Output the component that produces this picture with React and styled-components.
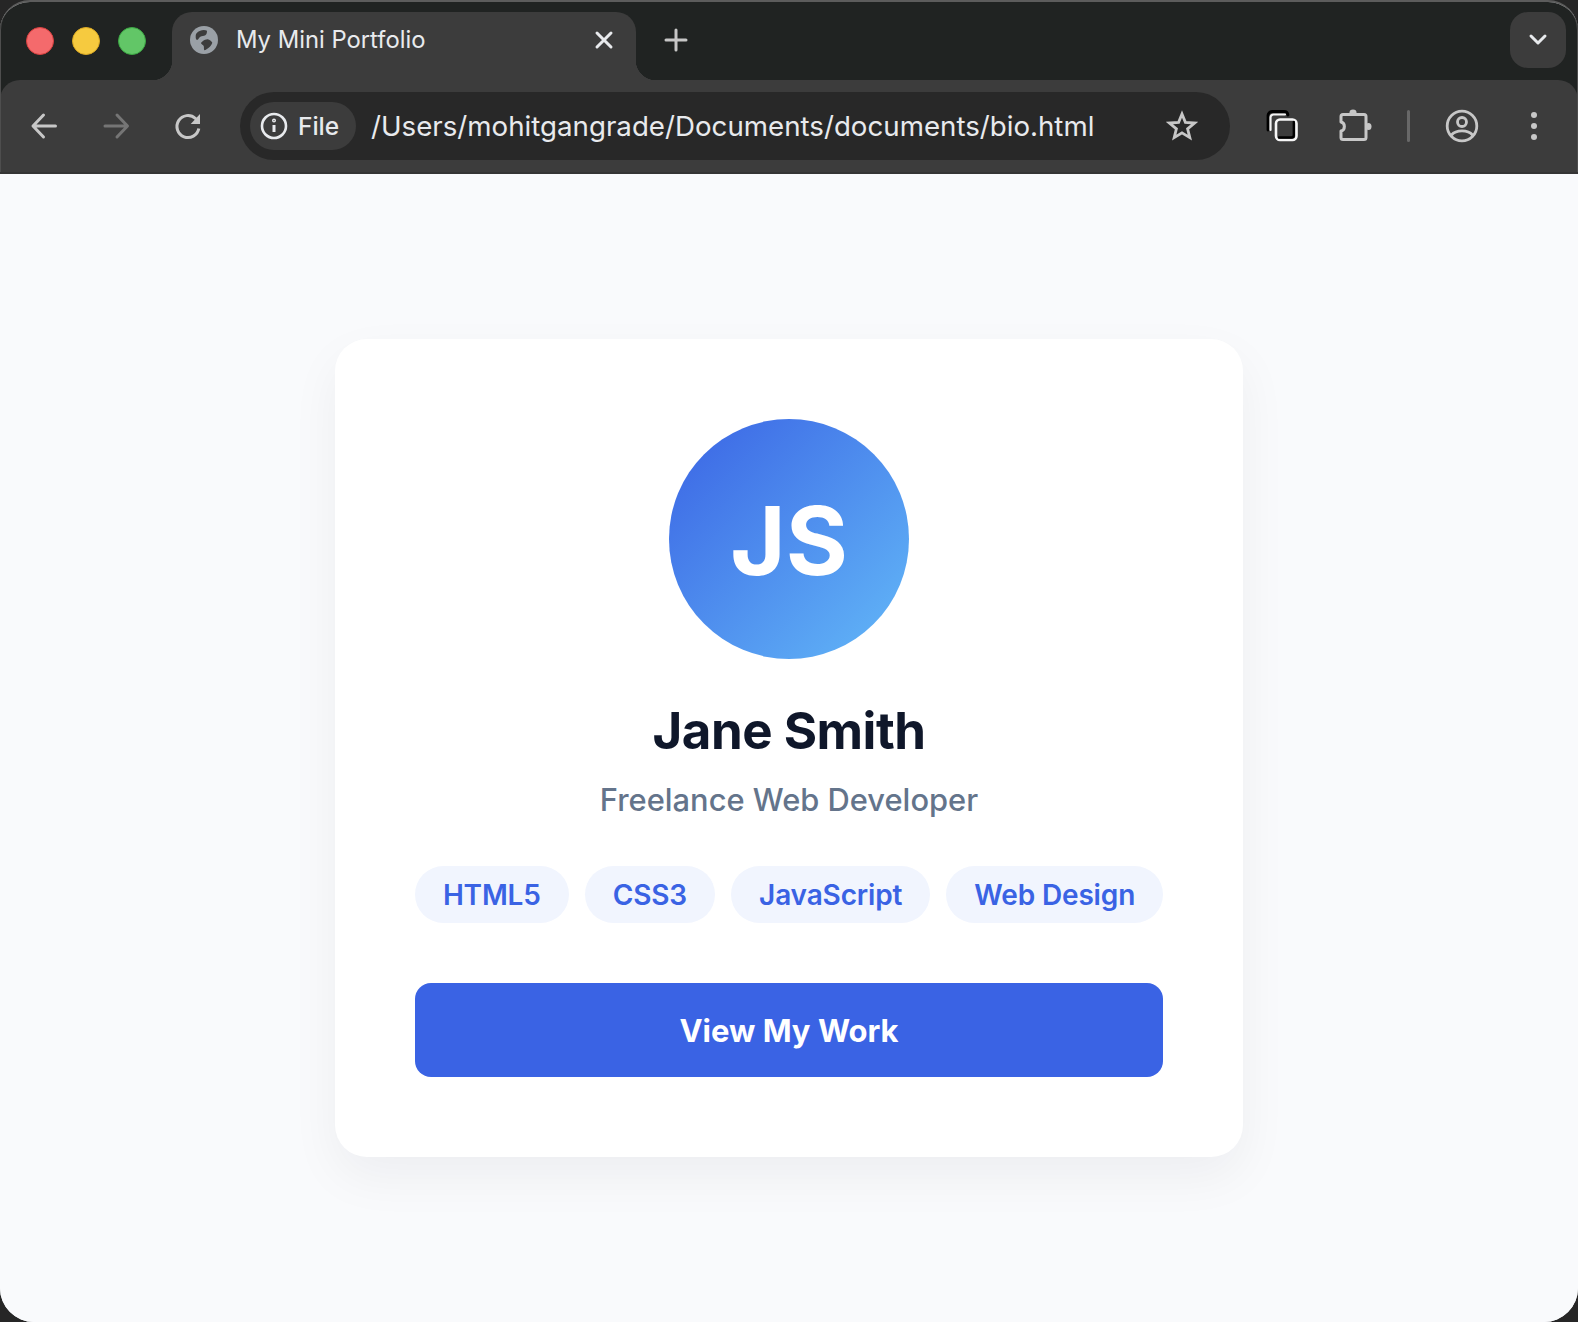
import React from "react";
import styled, { createGlobalStyle } from "styled-components";

const Global = createGlobalStyle`
  html, body { margin: 0; padding: 0; background: #262626; }
  body { font-family: Inter, "Liberation Sans", sans-serif; -webkit-font-smoothing: antialiased; }
  #root { width: 1578px; height: 1322px; }
  * { box-sizing: border-box; }
`;

const Win = styled.div`
  width: 1578px; height: 1322px; display: flex; flex-direction: column; position: relative;
  border-radius: 30px 30px 34px 34px; overflow: hidden; background: #f9fafc;
  border-top: 2px solid #5c5c5c;
  &::after {
    content: ""; position: absolute; top: -2px; left: 0; right: 0; height: 172px; pointer-events: none;
    border: 1px solid #4e4e4e; border-top: 0; border-bottom: 0; border-radius: 30px 30px 0 0;
  }
`;
const TitleBar = styled.div`
  height: 78px; flex: none; background: #202322; display: flex; align-items: flex-end;
  padding-left: 26px; position: relative;
`;
const Lights = styled.div`
  display: flex; gap: 18px; align-self: flex-start; margin-top: 25px; margin-right: 26px;
`;
const Light = styled.span`
  width: 28px; height: 28px; border-radius: 50%; background: ${p => p.$fill};
  border: 1px solid ${p => p.$edge}; display: block;
`;
const Tab = styled.div`
  width: 464px; height: 68px; background: #3c3c3c; border-radius: 20px 20px 0 0;
  display: flex; align-items: center; padding: 0 20px 13px 17px; position: relative; color: #e8eaed;
  &::before, &::after {
    content: ""; position: absolute; bottom: 0; width: 20px; height: 20px;
  }
  &::before { left: -20px; background: radial-gradient(circle at 0 0, transparent 20px, #3c3c3c 20.5px); }
  &::after { right: -20px; background: radial-gradient(circle at 100% 0, transparent 20px, #3c3c3c 20.5px); }
`;
const TabTitle = styled.span`
  font-size: 23.8px; font-weight: 400; margin-left: 17px; flex: 1; white-space: nowrap;
`;
const NewTab = styled.button`
  width: 56px; height: 56px; background: none; border: 0; padding: 0; margin: 0 0 12px 12px;
  display: flex; align-items: center; justify-content: center; align-self: flex-end;
`;
const TabMenu = styled.button`
  position: absolute; top: 10px; right: 12px; width: 56px; height: 56px; background: #3c3c3c; border: 0;
  border-radius: 18px; display: flex; align-items: center; justify-content: center; padding: 0;
`;
const Toolbar = styled.div`
  height: 94px; flex: none; background: #3c3c3c; display: flex; align-items: center;
  padding: 0 8px; border-bottom: 2px solid #353535; border-radius: 20px 20px 0 0;
`;
const ToolbarWrap = styled.div`
  background: #202322; flex: none;
`;
const ToolBtn = styled.button`
  width: 72px; height: 72px; flex: none; background: none; border: 0; padding: 0;
  display: flex; align-items: center; justify-content: center;
`;
const Omnibox = styled.div`
  flex: 1; height: 68px; margin: 0 16px; background: #282828; border-radius: 34px;
  display: flex; align-items: center; padding: 0 32px 0 10px; color: #e8eaed;
`;
const Chip = styled.div`
  width: 106px; height: 48px; background: #3c3c3c; border-radius: 24px; display: flex; align-items: center;
  padding-left: 10px; gap: 10px; font-size: 24.5px; font-weight: 500; flex: none;
`;
const Url = styled.span`
  font-size: 27.7px; margin-left: 15px; flex: 1; white-space: nowrap;
`;
const Divider = styled.div`
  width: 36px; flex: none; display: flex; justify-content: center;
  &::after { content: ""; width: 3px; height: 32px; border-radius: 2px; background: #686868; }
`;
const Page = styled.main`
  flex: 1; display: flex; align-items: center; justify-content: center; background: #f9fafc;
`;
const Card = styled.section`
  width: 908px; height: 818px; background: #fff; border-radius: 32px; padding: 80px;
  box-shadow: 0 20px 50px rgba(15, 23, 42, 0.05);
  display: flex; flex-direction: column; align-items: center;
`;
const Avatar = styled.div`
  width: 240px; height: 240px; border-radius: 50%; flex: none; padding-top: 3px;
  background: linear-gradient(135deg, #3a63e4, #63b9f8);
  display: flex; align-items: center; justify-content: center;
  color: #fff; font-size: 95px; font-weight: 700;
`;
const Name = styled.h1`
  margin: 40px 0 0; font-size: 51px; line-height: 64px; font-weight: 700; color: #0f172a; letter-spacing: -0.5px;
`;
const Role = styled.p`
  margin: 13px 0 0; font-size: 30.85px; line-height: 48px; font-weight: 500; color: #64748b;
`;
const Tags = styled.div`
  display: flex; gap: 16px; margin-top: 42px; justify-content: center;
`;
const TagPill = styled.span`
  height: 57px; padding: 1px 28px 0; border-radius: 28.5px; background: #f1f5fe; color: #3a63e4;
  font-size: 28px; font-weight: 600; display: flex; align-items: center; white-space: nowrap; letter-spacing: -0.15px;
`;
const Cta = styled.button`
  margin-top: 60px; width: 748px; height: 94px; flex: none; border: 0; border-radius: 16px; background: #3a63e4; color: #fff;
  font-family: inherit; font-size: 31px; font-weight: 700;
`;

const Stroke = ({ size = 36, color = "#c7c7c7", w = 3, children }) => (
  <svg width={size} height={size} viewBox={`0 0 ${size} ${size}`} fill="none" stroke={color} strokeWidth={w} strokeLinecap="round" strokeLinejoin="round">{children}</svg>
);

export default function App() {
  return (
    <>
      <Global />
      <Win>
        <TitleBar>
          <Lights>
            <Light $fill="#f46a6c" $edge="#d9403f" />
            <Light $fill="#f6ca3f" $edge="#dba924" />
            <Light $fill="#62c667" $edge="#3ca844" />
          </Lights>
          <Tab>
            <svg width="30" height="30" viewBox="0 0 30 30">
              <circle cx="15" cy="15" r="14" fill="#9aa0a6" />
              <path d="M6.7 11.7C6.6 10 7 8.8 8 7.7 10 5.8 12.5 5 14.7 5 16 5 17.2 5.2 18 5.7 18 7.6 17.6 9.4 16.3 10.3 14.8 11.3 12.8 10.8 11.3 11.7 10 12.5 9.6 14.6 8 15 7 14.6 6.6 13 6.7 11.7Z" fill="#3c3c3c" />
              <path d="M14 16C15.4 15 17 14.2 18.7 14.3 20.6 14.6 22.4 16 23.3 17.7 22.6 19.6 21.4 21.4 19.7 22.7 18.4 23.8 16.8 24.8 15.3 25.3 14.6 24 15.2 22.4 14.7 21 14.2 19.8 12.6 19.6 12 18.3 12.2 17.2 13.2 16.6 14 16Z" fill="#3c3c3c" />
            </svg>
            <TabTitle>My Mini Portfolio</TabTitle>
            <Stroke size={24} color="#e8eaed"><path d="M5 5L19 19M19 5L5 19" /></Stroke>
          </Tab>
          <NewTab aria-label="New tab">
            <Stroke size={26} color="#c7c7c7"><path d="M13 3V23M3 13H23" /></Stroke>
          </NewTab>
          <TabMenu aria-label="Tab menu">
            <Stroke size={24} color="#e8eaed"><path d="M5 8L12 15L19 8" /></Stroke>
          </TabMenu>
        </TitleBar>
        <ToolbarWrap>
          <Toolbar>
            <ToolBtn aria-label="Back">
              <Stroke size={32}><path d="M27.5 16H5.5M15.5 5L5 16L15.5 27" /></Stroke>
            </ToolBtn>
            <ToolBtn aria-label="Forward">
              <Stroke size={32} color="#757575"><path d="M5 16H27M17 5L27.5 16L17 27" /></Stroke>
            </ToolBtn>
            <ToolBtn aria-label="Reload">
              <svg width="32" height="32" viewBox="0 0 32 32" fill="none">
                <path d="M26.8 18.5A11 11 0 1 1 23.5 8.5L26 11" stroke="#c7c7c7" strokeWidth="3" />
                <path d="M28 4V14H18.7Z" fill="#c7c7c7" />
              </svg>
            </ToolBtn>
            <Omnibox>
              <Chip>
                <Stroke size={28} color="#e8eaed" w={2.6}>
                  <circle cx="14" cy="14" r="12" />
                  <path d="M14 13V20" strokeWidth="3" strokeLinecap="butt" />
                  <circle cx="14" cy="8.6" r="0.7" />
                </Stroke>
                File
              </Chip>
              <Url>/Users/mohitgangrade/Documents/documents/bio.html</Url>
              <svg width="32" height="32" viewBox="0 0 32 32" fill="none" stroke="#c7c7c7" strokeWidth="2.8" strokeLinejoin="miter">
                <path d="M16 4L19.4 12.4L28.6 13L21.6 18.8L23.8 27.6L16 22.8L8.2 27.6L10.4 18.8L3.4 13L12.6 12.4Z" />
              </svg>
            </Omnibox>
            <ToolBtn aria-label="Tabs">
              <svg width="36" height="36" viewBox="0 0 36 36" fill="none" strokeLinecap="round">
                <path d="M4 22V7.5A4 4 0 0 1 8 3.5H20A4 4 0 0 1 24 7" stroke="#000" strokeWidth="2.8" />
                <path d="M6.5 22V9.5A3 3 0 0 1 9.5 6.5H21" stroke="#f2f2f2" strokeWidth="2.2" />
                <rect x="12" y="11.5" width="20.5" height="20.5" rx="4" stroke="#f6f6f6" strokeWidth="2.6" />
                <path d="M29.8 14V27A2.5 2.5 0 0 1 27.3 29.5H15" stroke="#000" strokeWidth="2.4" />
              </svg>
            </ToolBtn>
            <ToolBtn aria-label="Extensions">
              <svg width="36" height="36" viewBox="0 0 36 36" fill="none" stroke="#c7c7c7" strokeWidth="3" strokeLinejoin="round">
                <path d="M7 6.5H28A2 2 0 0 1 30 8.5V29.5A2 2 0 0 1 28 31.5H7A2 2 0 0 1 5 29.5V23C9.5 22 9.5 15 5 14V8.5A2 2 0 0 1 7 6.5Z" />
                <ellipse cx="17" cy="4.5" rx="3.5" ry="3" fill="#c7c7c7" stroke="none" />
                <ellipse cx="32.5" cy="18.5" rx="3" ry="3.5" fill="#c7c7c7" stroke="none" />
              </svg>
            </ToolBtn>
            <Divider />
            <ToolBtn aria-label="Profile">
              <Stroke size={36} w={2.8}>
                <circle cx="18" cy="18" r="14.8" />
                <circle cx="18" cy="14" r="4.5" />
                <path d="M7.5 27C12 21.5 24 21.5 28.5 27" />
              </Stroke>
            </ToolBtn>
            <ToolBtn aria-label="Menu">
              <svg width="8" height="32" viewBox="0 0 8 32" fill="#c7c7c7">
                <circle cx="4" cy="5" r="3" /><circle cx="4" cy="16" r="3" /><circle cx="4" cy="27" r="3" />
              </svg>
            </ToolBtn>
          </Toolbar>
        </ToolbarWrap>
        <Page>
          <Card>
            <Avatar>JS</Avatar>
            <Name>Jane Smith</Name>
            <Role>Freelance Web Developer</Role>
            <Tags>
              <TagPill>HTML5</TagPill>
              <TagPill>CSS3</TagPill>
              <TagPill>JavaScript</TagPill>
              <TagPill>Web Design</TagPill>
            </Tags>
            <Cta>View My Work</Cta>
          </Card>
        </Page>
      </Win>
    </>
  );
}
